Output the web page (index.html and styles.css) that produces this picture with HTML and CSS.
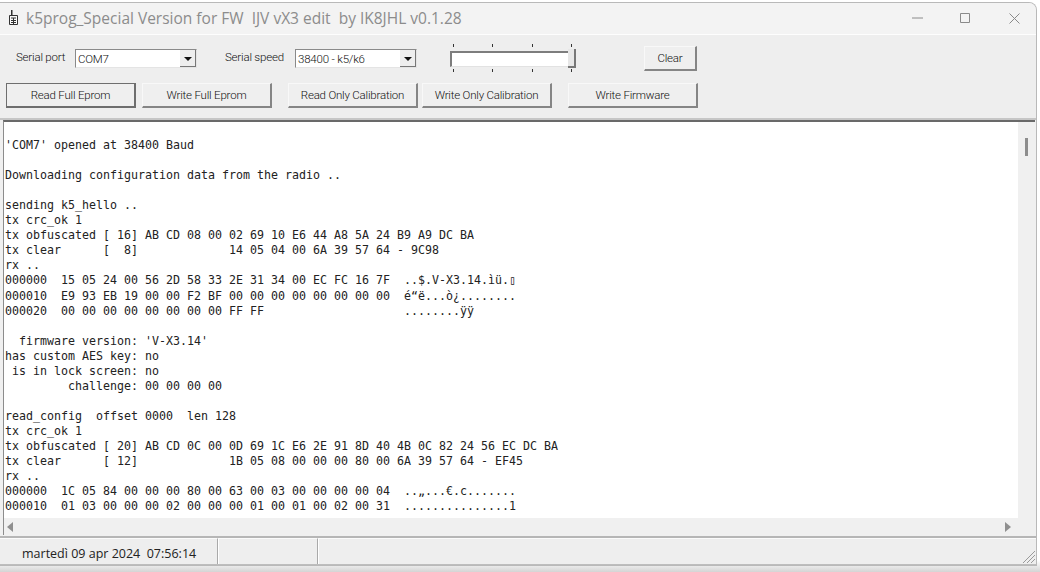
FILE: index.html
```html
<!DOCTYPE html>
<html lang="it">
<head>
<meta charset="utf-8">
<title>k5prog</title>
<link rel="stylesheet" href="styles.css">
</head>
<body>
<div class="window">
  <header class="titlebar">
    <svg class="app-icon" width="11" height="16" viewBox="0 0 11 16"><path d="M3 0h1.500v5H3z" fill="#333"/><path d="M1.500 5.500h8v9h-8z" fill="#fafafa" stroke="#333"/><path d="M3 7.500h5v1H3zM3 10h5v1H3zM3 12h5v1H3zM5 8h1v6H5z" fill="#333"/></svg>
    <span class="title">k5prog_Special Version for FW  IJV vX3 edit  by IK8JHL v0.1.28</span>
    <div class="controls">
      <svg class="ctl-min" width="12" height="2" viewBox="0 0 12 2"><path d="M0 1h11" stroke="#8a8a8a"/></svg>
      <svg class="ctl-max" width="10" height="10" viewBox="0 0 10 10"><path d="M.5.500h9v9h-9z" fill="none" stroke="#8a8a8a"/></svg>
      <svg class="ctl-close" width="11" height="11" viewBox="0 0 11 11"><path d="M.5.500l10 10M10.500.500l-10 10" stroke="#8a8a8a" fill="none"/></svg>
    </div>
  </header>

  <section class="toolbar">
    <div class="row row-top">
      <label class="lbl lbl-port">Serial port</label>
      <div class="combo"><span>COM7</span><i class="drop"></i></div>
      <label class="lbl lbl-speed">Serial speed</label>
      <div class="combo"><span>38400 - k5/k6</span><i class="drop"></i></div>
      <div class="slider">
        <div class="ticks"><i></i><i></i><i></i><i></i></div>
        <div class="track"><b class="thumb"></b></div>
        <div class="ticks"><i></i><i></i><i></i><i></i></div>
      </div>
      <button class="btn btn-clear">Clear</button>
    </div>
    <div class="row row-btns">
      <button class="btn btn-first">Read Full Eprom</button>
      <button class="btn btn-second">Write Full Eprom</button>
      <button class="btn btn-third">Read Only Calibration</button>
      <button class="btn btn-fourth">Write Only Calibration</button>
      <button class="btn btn-fifth">Write Firmware</button>
    </div>
  </section>

  <main class="memo">
<pre class="log">

'COM7' opened at 38400 Baud

Downloading configuration data from the radio ..

sending k5_hello ..
tx crc_ok 1
tx obfuscated [ 16] AB CD 08 00 02 69 10 E6 44 A8 5A 24 B9 A9 DC BA
tx clear      [  8]             14 05 04 00 6A 39 57 64 - 9C98
rx ..
000000  15 05 24 00 56 2D 58 33 2E 31 34 00 EC FC 16 7F  ..$.V-X3.14.ìü.▯
000010  E9 93 EB 19 00 00 F2 BF 00 00 00 00 00 00 00 00  é“ë...ò¿........
000020  00 00 00 00 00 00 00 00 FF FF                    ........ÿÿ

  firmware version: 'V-X3.14'
has custom AES key: no
 is in lock screen: no
         challenge: 00 00 00 00

read_config  offset 0000  len 128
tx crc_ok 1
tx obfuscated [ 20] AB CD 0C 00 0D 69 1C E6 2E 91 8D 40 4B 0C 82 24 56 EC DC BA
tx clear      [ 12]             1B 05 08 00 00 00 80 00 6A 39 57 64 - EF45
rx ..
000000  1C 05 84 00 00 00 80 00 63 00 03 00 00 00 00 04  ..„...€.c.......
000010  01 03 00 00 00 02 00 00 00 01 00 01 00 02 00 31  ...............1</pre>
    <div class="vscroll"><i class="vthumb"></i></div>
    <div class="hscroll"><i class="arrow-left"></i><i class="arrow-right"></i></div>
    <div class="corner"></div>
  </main>

  <footer class="statusbar">
    <div class="panel panel-time">martedì 09 apr 2024  07:56:14</div>
    <div class="panel panel-empty"></div>
    <div class="panel panel-rest">
      <svg class="grip" width="16" height="16" viewBox="0 0 16 16"><path d="M15 3L3 15M15 7l-8 8M15 11l-4 4" stroke="#9a9a9a" fill="none"/></svg>
    </div>
  </footer>
</div>
</body>
</html>
```

FILE: styles.css
```css
* { box-sizing: border-box; }
html, body { margin: 0; padding: 0; }
body {
  width: 1040px;
  height: 572px;
  overflow: hidden;
  background: linear-gradient(#fff 0, #fff 560px, #d4d4d4 572px);
  padding: 2px 3px 6px 0;
}
.window {
  height: 564px;
  display: flex;
  flex-direction: column;
  background: #f0f0f0;
  border: 1px solid #b9b9b9;
  border-left: 0;
  border-radius: 0 8px 0 0;
  overflow: hidden;
  font-family: "Roboto", "Liberation Sans", Arial, sans-serif;
}
.titlebar {
  flex: 0 0 32px;
  display: flex;
  align-items: center;
  padding: 0 0 1px 8px;
  background: #f3f3f3;
  border-bottom: 1px solid #fdfdfd;
}
.app-icon { flex: none; margin-right: 7px; }
.title {
  font-family: "Open Sans", sans-serif;
  font-size: 15.5px;
  color: #8c8c8c;
  white-space: pre;
}
.controls {
  margin-left: auto;
  display: flex;
  align-items: center;
  padding-right: 16px;
}
.ctl-min { margin-right: 36px; }
.ctl-max { margin-right: 39px; }

.toolbar {
  flex: 0 0 85px;
  display: flex;
  flex-direction: column;
  border-bottom: 2px solid #c6c6c6;
  background: #eeeeee;
}
.row { display: flex; align-items: center; }
.row-top { height: 48px; padding-top: 11px; align-items: flex-start; }
.row-btns { height: 25px; padding-left: 6px; }

.lbl { font-size: 11.5px; font-weight: 300; letter-spacing: -0.2px; color: #111; white-space: nowrap; padding-top: 4px; }
.lbl-port { margin-left: 16px; width: 59px; }
.lbl-speed { margin-left: 28px; width: 70px; }
.combo {
  width: 122px;
  height: 19px;
  margin-top: 3px;
  display: flex;
  align-items: center;
  justify-content: space-between;
  background: #fff;
  border: 1px solid #8a8a8a;
  border-right-color: #e4e4e4;
  border-bottom-color: #e4e4e4;
  padding-left: 2px;
  font-size: 11.5px;
  font-weight: 300;
  letter-spacing: -0.2px;
  color: #111;
}
.drop {
  position: relative;
  width: 16px;
  height: 17px;
  background: #eeeeee;
  border-right: 1px solid #777;
  border-bottom: 1px solid #777;
}
.drop::after {
  content: "";
  position: absolute;
  left: 4px;
  top: 7px;
  border: 4px solid transparent;
  border-top-color: #111;
  border-bottom-width: 0;
}
.slider {
  width: 126px;
  margin-left: 33px;
  margin-top: -2px;
  display: flex;
  flex-direction: column;
}
.ticks {
  display: flex;
  justify-content: space-between;
  padding: 0 4px 0 3px;
  height: 4px;
}
.ticks i { width: 1px; height: 3px; background: #333; }
.track {
  position: relative;
  height: 19px;
  margin: 1px 0;
}
.track::before {
  content: "";
  position: absolute;
  left: 0;
  right: 6px;
  top: 2px;
  height: 13px;
  background: #fff;
  border-top: 2px solid #7d7d7d;
  border-left: 2px solid #7d7d7d;
  border-bottom: 1px solid #e2e2e2;
}
.thumb {
  position: absolute;
  right: 0;
  top: 0;
  width: 8px;
  height: 19px;
  background: #e7e7e7;
  border-right: 2px solid #777;
  border-bottom: 2px solid #777;
}
.btn {
  height: 25px;
  padding: 0;
  background: #efefef;
  border: 1px solid #f8f8f8;
  border-right: 2px solid #858585;
  border-bottom: 2px solid #858585;
  font-family: "Roboto", "Liberation Sans", Arial, sans-serif;
  font-size: 11.5px;
  font-weight: 300;
  letter-spacing: -0.2px;
  color: #111;
}
.btn-clear { width: 53px; margin-left: 68px; }
.btn-first { width: 130px; margin-left: 0; border: 1px solid #6e6e6e; border-right: 2px solid #6e6e6e; border-bottom: 2px solid #6e6e6e; }
.btn-second { width: 130px; margin-left: 6px; }
.btn-third { width: 130px; margin-left: 16px; }
.btn-fourth { width: 130px; margin-left: 4px; }
.btn-fifth { width: 130px; margin-left: 16px; }

.memo {
  flex: 1;
  min-height: 0;
  margin-left: 3px;
  margin-right: 1px;
  display: grid;
  grid-template-columns: 1fr 17px;
  grid-template-rows: 1fr 17px;
  border-top: 2px solid #696969;
  border-left: 1px solid #8c8c8c;
  background: #f0f0f0;
}
.log {
  margin: 0;
  padding: 1px 0 0 1px;
  overflow: hidden;
  background: #fff;
  font-family: "DejaVu Sans Mono", monospace;
  font-size: 11.63px;
  line-height: 15.04px;
  color: #222;
}
.vscroll { position: relative; background: #f0f0f0; }
.vthumb {
  position: absolute;
  left: 7px;
  top: 16px;
  width: 3px;
  height: 18px;
  background: #8d8d8d;
}
.hscroll {
  display: flex;
  align-items: center;
  justify-content: space-between;
  padding: 0 7px 0 3px;
  background: #f0f0f0;
}
.arrow-left, .arrow-right {
  width: 0;
  height: 0;
  border: 5px solid transparent;
}
.arrow-left { border-right-color: #8f8f8f; border-left-width: 0; border-right-width: 6px; }
.arrow-right { border-left-color: #8f8f8f; border-right-width: 0; border-left-width: 6px; }
.corner { background: #f0f0f0; }

.statusbar {
  flex: 0 0 29px;
  display: flex;
  border-top: 2px solid #b6b6b6;
  border-bottom: 1px solid #bdbdbd;
  background: #eeeeee;
  margin-top: 1px;
}
.panel {
  border-right: 1px solid #a9a9a9;
  box-shadow: 1px 0 0 #fff;
  border-top: 1px solid #fbfbfb;
  font-family: "Open Sans", sans-serif;
  font-size: 12.5px;
  color: #222;
  white-space: pre;
  display: flex;
  align-items: center;
}
.panel-time { width: 218px; padding: 3px 0 0 22px; }
.panel-empty { width: 100px; }
.panel-rest { flex: 1; border-right: 0; box-shadow: none; justify-content: flex-end; align-items: flex-end; }
.grip { display: block; }
```
